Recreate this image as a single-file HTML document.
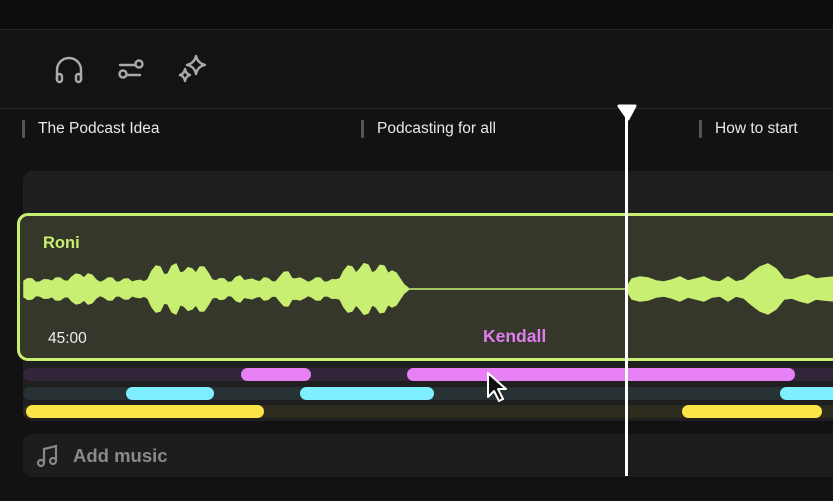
<!DOCTYPE html>
<html><head><meta charset="utf-8"><style>
html,body{margin:0;padding:0;width:833px;height:501px;overflow:hidden;background:#121212;font-family:"Liberation Sans",sans-serif}
.abs{position:absolute}
.top{left:0;top:0;width:833px;height:29px;background:#0d0d0d;border-bottom:1px solid #262626}
.tool{left:0;top:30px;width:833px;height:78px;background:#131313;border-bottom:1px solid #262626}
.ch{top:120px;height:18px;color:#e8e8e8;font-size:15.5px;line-height:18px;padding-left:16px}
.ch:before{content:"";position:absolute;left:0;top:0;width:3px;height:18px;background:#555;border-radius:1px}
.panel{left:23px;top:171px;width:820px;height:250px;background:#1f1f1f;border-radius:10px 0 0 10px}
.clip{left:17px;top:213px;width:830px;height:142px;border:3px solid #c8ef72;border-radius:11px;background:#34372a}
.row{height:13px;border-radius:7px}
.bar{height:13px;border-radius:7px;position:absolute}
</style></head><body>
<div class="abs top"></div>
<div class="abs tool"></div>
<svg class="abs" style="left:50px;top:50px" width="170" height="40" viewBox="0 0 170 40" fill="none" stroke="#aaa" stroke-width="2.4" stroke-linecap="round" stroke-linejoin="round">
<path d="M7 30V20a12 12 0 0 1 24 0v10"/><rect x="7" y="24" width="5" height="8" rx="2.5"/><rect x="26" y="24" width="5" height="8" rx="2.5"/>
<path d="M70 15h20M70 25h20"/><circle cx="89" cy="14" r="3.5" fill="#131313"/><circle cx="73" cy="24" r="3.5" fill="#131313"/>
<path d="M146 6q1.5 7 9 9q-7.5 1.5 -9 9q-1.5-7.5-9-9q7.5-2 9-9z"/><path d="M135 19q1 5 5 6q-4 1 -5 6q-1-5-5-6q4-1 5-6z"/>
</svg>
<div class="abs ch" style="left:22px">The Podcast Idea</div>
<div class="abs ch" style="left:361px">Podcasting for all</div>
<div class="abs ch" style="left:699px">How to start</div>
<div class="abs panel"></div>
<div class="abs clip"></div>
<svg class="abs" style="left:0;top:250px" width="833" height="80" viewBox="0 250 833 80">
<g fill="#c8ef72" stroke="#c8ef72" stroke-width="1.5" stroke-linejoin="round">
<polygon id="w1" points=""/>
<polygon id="w2" points=""/>
</g>
<line x1="408" y1="289" x2="627" y2="289" stroke="#c8ef72" stroke-width="1.5"/>
</svg>
<div class="abs" style="left:43px;top:234px;color:#c8ef72;font-weight:bold;font-size:16.5px">Roni</div>
<div class="abs" style="left:48px;top:330px;color:#eee;font-size:15.5px">45:00</div>
<div class="abs" style="left:483px;top:326px;color:#e07ef0;font-weight:bold;font-size:17.5px">Kendall</div>
<div class="abs row" style="left:23px;top:368px;width:820px;background:#33263a"></div>
<div class="abs row" style="left:23px;top:387px;width:820px;background:#283234"></div>
<div class="abs row" style="left:23px;top:405px;width:820px;background:#2d2c1f"></div>
<div class="bar" style="left:241px;top:368px;width:70px;background:#e77ff5"></div>
<div class="bar" style="left:407px;top:368px;width:388px;background:#e77ff5"></div>
<div class="bar" style="left:126px;top:387px;width:88px;background:#7eefff"></div>
<div class="bar" style="left:300px;top:387px;width:134px;background:#7eefff"></div>
<div class="bar" style="left:780px;top:387px;width:60px;background:#7eefff"></div>
<div class="bar" style="left:26px;top:405px;width:238px;background:#fde447"></div>
<div class="bar" style="left:682px;top:405px;width:140px;background:#fde447"></div>
<div class="abs" style="left:23px;top:434px;width:820px;height:43px;background:#1d1d1d;border-radius:10px 0 0 10px"></div>
<svg class="abs" style="left:36px;top:443px" width="24" height="26" viewBox="0 0 24 26" fill="none" stroke="#888" stroke-width="2.2" stroke-linecap="round"><path d="M8 20V6l12-3v14"/><circle cx="5" cy="20" r="3"/><circle cx="17" cy="18" r="3"/></svg>
<div class="abs" style="left:73px;top:445px;color:#8a8a8a;font-weight:bold;font-size:18.5px">Add music</div>
<div class="abs" style="left:625px;top:112px;width:3px;height:364px;background:#fff"></div>
<svg class="abs" style="left:616px;top:103px" width="22" height="18" viewBox="0 0 22 18"><path d="M3 3h16l-7 13z" fill="#fff" stroke="#fff" stroke-width="3" stroke-linejoin="round"/></svg>
<svg class="abs" style="left:485px;top:371px" width="24" height="34" viewBox="0 0 24 34"><path d="M3 2v24l6-6 5 10 4-2-5-10h8z" fill="#111" stroke="#fff" stroke-width="2" stroke-linejoin="round"/></svg>
<script>
function mk(id,pts){var t=[],b=[];pts.forEach(function(p){t.push(p[0]+","+(289-p[1]));b.unshift(p[0]+","+(289+p[1]));});document.getElementById(id).setAttribute("points",t.concat(b).join(" "));}
var a=[8,10,7,9,11,8,12,14,15,9,8,11,7,10,8,7,18,22,15,25,17,20,22,16,8,10,7,13,9,8,11,7,12,17,10,9,8,11,7,9,18,22,20,24,18,23,18,10,1];
var p=[];a.forEach(function(v,i){p.push([24+i*8,v]);if(i<a.length-1){var m=(v+a[i+1])/2;p.push([28+i*8,m*(i%2?0.75:1.15)]);}});mk("w1",p);
var r=[[627,2],[632,10],[640,12],[648,11],[656,8],[664,7],[672,9],[680,12],[688,8],[696,10],[704,12],[712,8],[720,7],[728,12],[736,7],[744,9],[752,16],[760,22],[768,25],[776,20],[784,10],[792,9],[800,12],[808,14],[816,10],[824,11],[834,12]];
mk("w2",r);
</script>
</body></html>
